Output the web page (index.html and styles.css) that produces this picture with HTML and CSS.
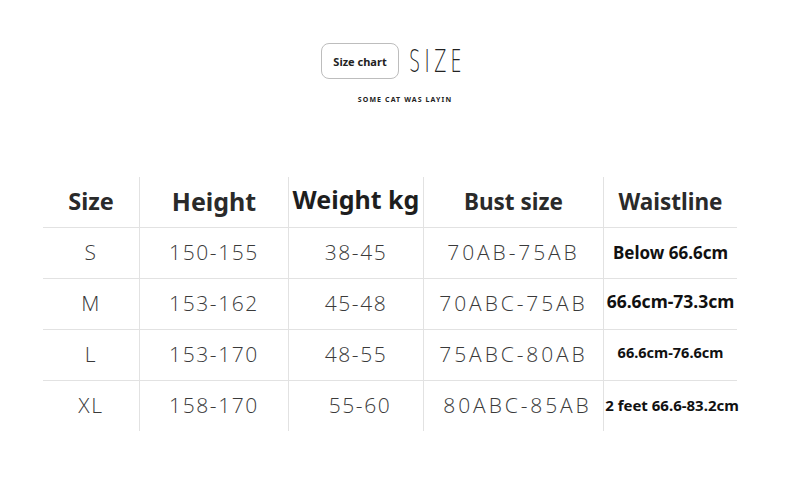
FILE: index.html
```html
<!DOCTYPE html>
<html>
<head>
<meta charset="utf-8">
<link rel="stylesheet" href="styles.css">
</head>
<body>
<div class="page">
  <header class="title">
    <div class="title-row">
      <span class="badge">Size chart</span>
      <span class="big">SIZE</span>
    </div>
    <div class="sub">SOME CAT WAS LAYIN</div>
  </header>
  <div class="table">
    <div class="cell head c1">Size</div>
    <div class="cell head c2 hl">Height</div>
    <div class="cell head c3 hl big-head">Weight kg</div>
    <div class="cell head c4 hl">Bust size</div>
    <div class="cell head c5 hl">Waistline</div>

    <div class="cell ht">S</div>
    <div class="cell ht hl num">150-155</div>
    <div class="cell ht hl num">38-45</div>
    <div class="cell ht hl num bust">70AB-75AB</div>
    <div class="cell ht hl waist w1">Below 66.6cm</div>

    <div class="cell ht">M</div>
    <div class="cell ht hl num">153-162</div>
    <div class="cell ht hl num">45-48</div>
    <div class="cell ht hl num bust">70ABC-75AB</div>
    <div class="cell ht hl waist w2">66.6cm-73.3cm</div>

    <div class="cell ht">L</div>
    <div class="cell ht hl num">153-170</div>
    <div class="cell ht hl num">48-55</div>
    <div class="cell ht hl num bust">75ABC-80AB</div>
    <div class="cell ht hl waist w3">66.6cm-76.6cm</div>

    <div class="cell ht">XL</div>
    <div class="cell ht hl num">158-170</div>
    <div class="cell ht hl num shift">55-60</div>
    <div class="cell ht hl num bust shift">80ABC-85AB</div>
    <div class="cell ht hl waist w4">2 feet 66.6-83.2cm</div>
  </div>
</div>
</body>
</html>
```
FILE: styles.css
```css
html, body {
  margin: 0;
  padding: 0;
  background: #fff;
}
.page {
  width: 790px;
  height: 504px;
  font-family: "Noto Sans", "Open Sans", sans-serif;
  color: #222;
}
.title {
  padding-top: 43px;
  display: flex;
  flex-direction: column;
  align-items: center;
}
.title-row {
  display: flex;
  align-items: center;
  gap: 10px;
  margin-right: 8px;
}
.badge {
  box-sizing: border-box;
  width: 78px;
  height: 36px;
  border: 1px solid #bdbdbd;
  border-radius: 8px;
  display: flex;
  align-items: center;
  justify-content: center;
  font-size: 11px;
  font-weight: 700;
  color: #222;
}
.big {
  display: inline-block;
  font-family: "DejaVu Sans", sans-serif;
  font-weight: 200;
  font-size: 32px;
  letter-spacing: 8px;
  transform: scaleX(0.55);
  transform-origin: left center;
  width: 52px;
  color: #222;
  line-height: 36px;
}
.sub {
  margin-top: 16px;
  margin-left: 20px;
  font-size: 7px;
  font-weight: 700;
  letter-spacing: 1.1px;
  color: #222;
}
.table {
  margin-top: 73px;
  margin-left: 43px;
  width: 694px;
  display: grid;
  grid-template-columns: 96px 149px 135px 180px 134px;
  grid-template-rows: 50px 51px 51px 51px 51px;
}
.cell {
  display: flex;
  align-items: center;
  justify-content: center;
  box-sizing: border-box;
  white-space: nowrap;
}
.hl {
  border-left: 1px solid #e2e2e2;
}
.ht {
  border-top: 1px solid #e2e2e2;
}
.head {
  font-weight: 700;
  font-size: 22.5px;
  color: #2a2a2a;
  padding-bottom: 2px;
}
.c1 { font-size: 23.5px; }
.c2 { font-size: 25px; }
.big-head {
  font-size: 25px;
  padding-bottom: 7px;
  color: #1e1e1e;
}
.num, .ht {
  font-family: "Open Sans", "Noto Sans", sans-serif;
  font-weight: 300;
  font-size: 21px;
  letter-spacing: 1.6px;
  color: #3a3a3a;
  padding-bottom: 2px;
}
.bust {
  letter-spacing: 2.9px;
}
.shift {
  padding-left: 8px;
}
.waist {
  font-family: "Noto Sans", sans-serif;
  font-weight: 700;
  letter-spacing: 0;
  color: #111;
}
.w1 { font-size: 17px; }
.w2 { font-size: 17.5px; padding-bottom: 6px; }
.w3 { font-size: 14.5px; padding-bottom: 6px; }
.w4 { font-size: 15px; padding-left: 3px; }
```
